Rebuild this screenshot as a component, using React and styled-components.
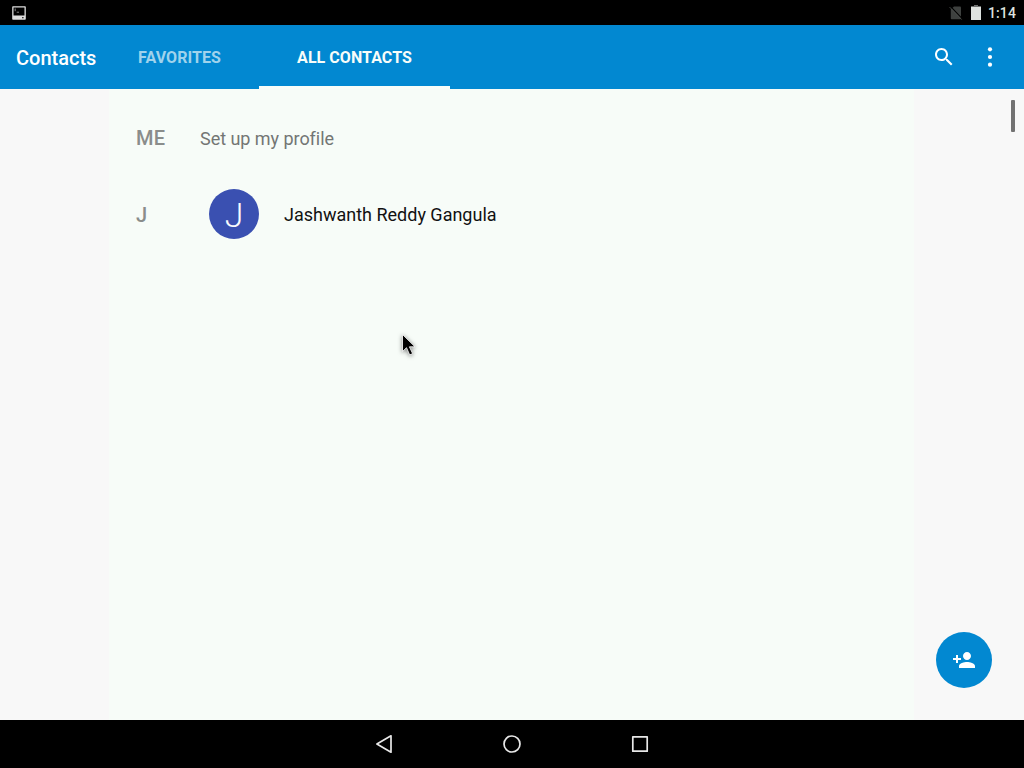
import React from 'react';
import styled, { createGlobalStyle } from 'styled-components';

const GlobalStyle = createGlobalStyle`
  * { box-sizing: border-box; }
  body { margin: 0; background: #000; font-family: Roboto, "Liberation Sans", sans-serif; }
`;

const Screen = styled.div`
  position: relative;
  width: 1024px;
  height: 768px;
  display: flex;
  flex-direction: column;
  overflow: hidden;
  background: #f8f8f8;
  svg { display: block; flex: none; }
`;

const StatusBar = styled.header`
  flex: none;
  height: 25px;
  padding: 0 8px 0 12px;
  display: flex;
  align-items: center;
  justify-content: space-between;
  background: #000;
`;

const StatusGroup = styled.div`
  display: flex;
  align-items: center;
`;

const Clock = styled.span`
  width: 28px;
  margin-left: 7px;
  font-size: 14px;
  font-weight: 500;
  line-height: 16px;
  padding-top: 1px;
  letter-spacing: 0.1px;
  white-space: nowrap;
  color: #dee2df;
`;

const AppBar = styled.nav`
  flex: none;
  height: 64px;
  display: flex;
  background: #0288d1;
`;

const Title = styled.h1`
  width: 100px;
  margin: 0;
  padding: 1px 0 0 16px;
  font-size: 20px;
  font-weight: 500;
  line-height: 64px;
  color: #fff;
`;

const Tab = styled.button`
  width: ${(p) => p.$width}px;
  padding: 4px 0 0;
  border: 0;
  border-bottom: 3px solid ${(p) => (p.$active ? '#f8fdf9' : 'transparent')};
  background: none;
  font: 700 16px/24px Roboto, "Liberation Sans", sans-serif;
  letter-spacing: 0.05px;
  text-align: center;
  white-space: nowrap;
  color: ${(p) => (p.$active ? '#f8fdf9' : '#a0d3ec')};
`;

const Actions = styled.div`
  margin-left: auto;
  padding-right: 22px;
  display: flex;
  align-items: center;
  gap: 22px;
`;

const Content = styled.main`
  flex: 1;
  padding: 0 110px 0 109px;
  display: flex;
`;

const Panel = styled.section`
  flex: 1;
  padding: 11px 0 0 27px;
  background: #f7fcf8;
`;

const Row = styled.div`
  height: 76px;
  display: flex;
  align-items: center;
`;

const SectionLabel = styled.span`
  width: ${(p) => p.$width}px;
  padding-top: ${(p) => p.$drop || 0}px;
  font-size: 20px;
  font-weight: 500;
  letter-spacing: 0.3px;
  color: #8a8d8b;
`;

const RowText = styled.span`
  padding-top: 2px;
  font-size: 18px;
  line-height: 24px;
  letter-spacing: ${(p) => (p.$muted ? '-0.04px' : 'normal')};
  color: ${(p) => (p.$muted ? '#737674' : '#111')};
`;

const Avatar = styled.span`
  width: 50px;
  height: 50px;
  margin-right: 25px;
  border-radius: 50%;
  display: flex;
  align-items: center;
  justify-content: center;
  background: #3a50b1;
  color: #f8fafd;
  font-size: 34px;
  font-weight: 300;
  line-height: 50px;
  padding-top: 2px;
`;

const Scrollbar = styled.div`
  position: absolute;
  top: 100px;
  right: 9px;
  width: 4px;
  height: 32px;
  border-radius: 1px;
  background: #727272;
`;

const AddButton = styled.button`
  position: absolute;
  right: 32px;
  bottom: 80px;
  width: 56px;
  height: 56px;
  padding: 0;
  border: 0;
  border-radius: 50%;
  display: flex;
  align-items: center;
  justify-content: center;
  background: #0288d1;
`;

const Pointer = styled.svg`
  position: absolute;
  left: 396px;
  top: 327px;
  filter: drop-shadow(0 1px 2px rgba(0, 0, 0, 0.5));
`;

const NavBar = styled.footer`
  flex: none;
  height: 48px;
  display: flex;
  align-items: center;
  justify-content: center;
  gap: 104px;
  background: #000;
`;

const ScreenshotIcon = () => (
  <svg width="14" height="14" viewBox="0 0 14 14">
    <path d="M1 .2h12a.8.8 0 0 1 .8.8v12a.8.8 0 0 1-.8.8H1a.8.8 0 0 1-.8-.8V1A.8.8 0 0 1 1 .2zM1.5 1.4v8.2h11V1.4z" fill="#dedede" fillRule="evenodd" />
    <path d="M3.2 2.5v2.7M4.7 6.2h2.3" stroke="#999" strokeWidth=".9" fill="none" />
    <rect x="10.2" y="11" width="1.3" height="1.3" fill="#111" />
  </svg>
);

const NoSimIcon = () => (
  <svg width="14" height="14" viewBox="0 0 14 14">
    <path d="M5 .4h6q1 0 1 1v11.2q0 .7-.8.7H2.6q-.8 0-.8-.8V3.2z" fill="#3e413f" />
    <path d="M1.4.3l12 12.6" stroke="#000" strokeWidth="1.1" />
    <path d="M.5 1l12.2 12.6" stroke="#4a4d4b" strokeWidth=".9" />
  </svg>
);

const BatteryIcon = () => (
  <svg width="18" height="15" viewBox="-8 0 18 15">
    <path d="M3 0h4v1h3v1H0V1h3z" fill="#6e706f" />
    <path d="M0 2h10v13H0z" fill="#dee2df" />
  </svg>
);

const SearchIcon = () => (
  <svg width="24" height="24" viewBox="0 0 24 24" fill="#fff">
    <path d="M15.5 14h-.79l-.28-.27C15.41 12.59 16 11.11 16 9.5 16 5.91 13.09 3 9.5 3S3 5.91 3 9.5 5.91 16 9.5 16c1.61 0 3.09-.59 4.23-1.57l.27.28v.79l5 4.99L20.49 19l-4.99-5zm-6 0C7.01 14 5 11.99 5 9.5S7.01 5 9.5 5 14 7.01 14 9.5 11.99 14 9.5 14z" />
  </svg>
);

const MoreIcon = () => (
  <svg width="24" height="24" viewBox="0 0 24 24" fill="#fff">
    <circle cx="12" cy="4.3" r="2.1" />
    <circle cx="12" cy="12" r="2.1" />
    <circle cx="12" cy="19.7" r="2.1" />
  </svg>
);

const AddPersonIcon = () => (
  <svg width="24" height="24" viewBox="0 0 24 24" fill="#fff">
    <path d="M15 12c2.21 0 4-1.79 4-4s-1.79-4-4-4-4 1.79-4 4 1.79 4 4 4zm-9-2V7H4v3H1v2h3v3h2v-3h3v-2H6zm9 4c-2.67 0-8 1.34-8 4v2h16v-2c0-2.66-5.33-4-8-4z" />
  </svg>
);

const NavIcon = ({ children }) => (
  <svg width="24" height="24" viewBox="0 0 24 24" fill="none" stroke="#e8e8e8" strokeWidth="1.7" strokeLinejoin="round">
    {children}
  </svg>
);

export default function App() {
  return (
    <Screen>
      <GlobalStyle />
      <StatusBar>
        <ScreenshotIcon />
        <StatusGroup>
          <NoSimIcon />
          <BatteryIcon />
          <Clock>1:14</Clock>
        </StatusGroup>
      </StatusBar>
      <AppBar>
        <Title>Contacts</Title>
        <Tab $width={159}>FAVORITES</Tab>
        <Tab $width={191} $active>ALL CONTACTS</Tab>
        <Actions>
          <SearchIcon />
          <MoreIcon />
        </Actions>
      </AppBar>
      <Content>
        <Panel>
          <Row>
            <SectionLabel $width={64}>ME</SectionLabel>
            <RowText $muted>Set up my profile</RowText>
          </Row>
          <Row>
            <SectionLabel $width={73} $drop={2}>J</SectionLabel>
            <Avatar>J</Avatar>
            <RowText>Jashwanth Reddy Gangula</RowText>
          </Row>
        </Panel>
      </Content>
      <NavBar>
        <NavIcon><path d="M4.9 12 19 3.8v16.4z" /></NavIcon>
        <NavIcon><circle cx="12" cy="12" r="8" /></NavIcon>
        <NavIcon><rect x="4.8" y="4.8" width="14.4" height="14.4" /></NavIcon>
      </NavBar>
      <Scrollbar />
      <AddButton aria-label="Add contact"><AddPersonIcon /></AddButton>
      <Pointer width="26" height="34" viewBox="0 0 26 34">
        <path d="M6.5 7.5v17l4-3.8 3.2 7.2 2.9-1.3-3.2-6.8h5.6z" fill="#000" stroke="#fff" strokeWidth=".8" />
      </Pointer>
    </Screen>
  );
}
